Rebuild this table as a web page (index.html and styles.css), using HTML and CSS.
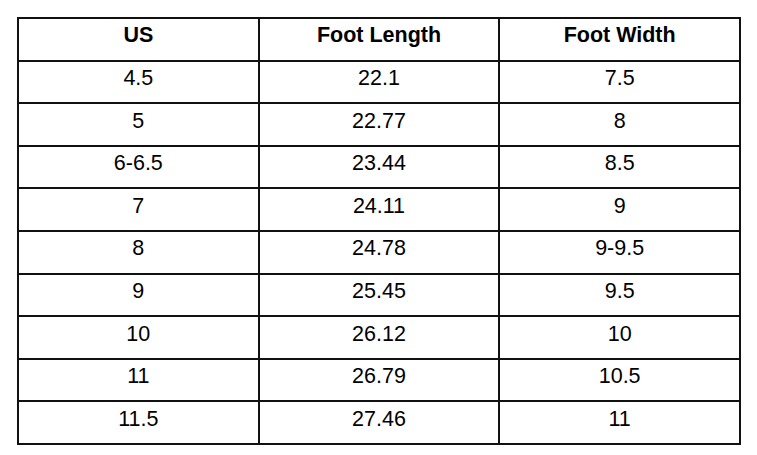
FILE: index.html
```html
<!DOCTYPE html>
<html>
<head>
<meta charset="utf-8">
<link rel="stylesheet" href="styles.css">
</head>
<body>
<table class="sizes">
  <thead>
    <tr><th>US</th><th>Foot Length</th><th>Foot Width</th></tr>
  </thead>
  <tbody>
    <tr><td>4.5</td><td>22.1</td><td>7.5</td></tr>
    <tr><td>5</td><td>22.77</td><td>8</td></tr>
    <tr><td>6-6.5</td><td>23.44</td><td>8.5</td></tr>
    <tr><td>7</td><td>24.11</td><td>9</td></tr>
    <tr><td>8</td><td>24.78</td><td>9-9.5</td></tr>
    <tr><td>9</td><td>25.45</td><td>9.5</td></tr>
    <tr><td>10</td><td>26.12</td><td>10</td></tr>
    <tr><td>11</td><td>26.79</td><td>10.5</td></tr>
    <tr><td>11.5</td><td>27.46</td><td>11</td></tr>
  </tbody>
</table>
</body>
</html>
```

FILE: styles.css
```css
html, body {
  margin: 0;
  padding: 0;
  background: #fff;
}
body {
  padding: 17px 0 0 17px;
  font-family: "Liberation Sans", Arial, sans-serif;
  color: #000;
}
.sizes {
  width: 724px;
  height: 428px;
  border-collapse: separate;
  border-spacing: 2px;
  background: #111;
  table-layout: fixed;
}
.sizes th,
.sizes td {
  background: #fff;
  text-align: center;
  vertical-align: middle;
  font-size: 21.5px;
  line-height: 1.15;
  padding: 0 0 7px 0;
  height: 33.6px;
  box-sizing: content-box;
}
.sizes th {
  font-weight: bold;
}
.sizes td {
  font-weight: normal;
}
```
